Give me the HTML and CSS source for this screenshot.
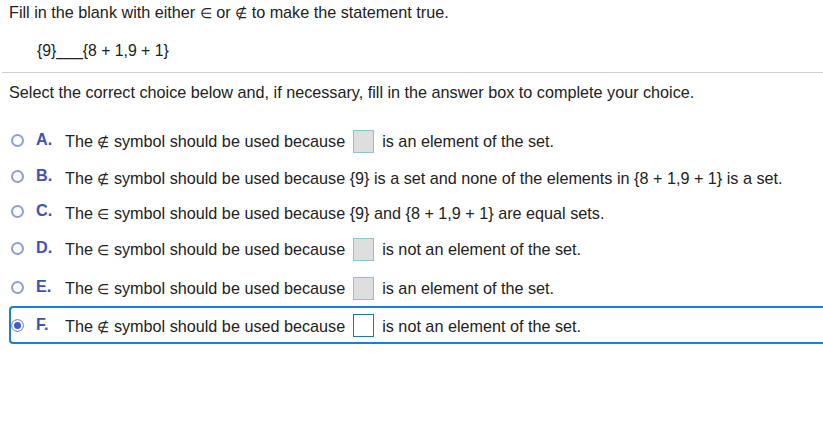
FILE: index.html
```html
<!DOCTYPE html>
<html>
<head>
<meta charset="utf-8">
<link rel="stylesheet" href="styles.css">
</head>
<body>
<div class="page">
  <div class="question">
    <p class="prompt">Fill in the blank with either <span class="sym">∈</span> or <span class="sym">∉</span> to make the statement true.</p>
    <p class="statement">{9}___{8 + 1,9 + 1}</p>
  </div>
  <div class="rule"></div>
  <p class="instruction">Select the correct choice below and, if necessary, fill in the answer box to complete your choice.</p>
  <ul class="choices">
    <li class="choice first">
      <span class="radio"></span><span class="letter">A.</span>
      <span class="text">The <span class="sym">∉</span> symbol should be used because <span class="box"></span> is an element of the set.</span>
    </li>
    <li class="choice">
      <span class="radio"></span><span class="letter">B.</span>
      <span class="text">The <span class="sym">∉</span> symbol should be used because {9} is a set and none of the elements in {8 + 1,9 + 1} is a set.</span>
    </li>
    <li class="choice mid">
      <span class="radio"></span><span class="letter">C.</span>
      <span class="text">The <span class="sym">∈</span> symbol should be used because {9} and {8 + 1,9 + 1} are equal sets.</span>
    </li>
    <li class="choice tall">
      <span class="radio"></span><span class="letter">D.</span>
      <span class="text">The <span class="sym">∈</span> symbol should be used because <span class="box"></span> is not an element of the set.</span>
    </li>
    <li class="choice tall">
      <span class="radio"></span><span class="letter">E.</span>
      <span class="text">The <span class="sym">∈</span> symbol should be used because <span class="box"></span> is an element of the set.</span>
    </li>
    <li class="choice tall selected">
      <span class="radio checked"></span><span class="letter">F.</span>
      <span class="text">The <span class="sym">∉</span> symbol should be used because <span class="box active"></span> is not an element of the set.</span>
    </li>
  </ul>
</div>
</body>
</html>
```

FILE: styles.css
```css
html, body {
  margin: 0;
  padding: 0;
  background: #ffffff;
  overflow: hidden;
}
body {
  font-family: "Liberation Sans", Arial, "DejaVu Sans", sans-serif;
  font-size: 16.2px;
  color: #222222;
}
.page {
  width: 823px;
}
p {
  margin: 0;
}
.question {
  padding: 3px 0 0 9px;
}
.prompt {
  line-height: 18px;
}
.statement {
  margin-top: 20px;
  padding-left: 28px;
  font-size: 15.8px;
  line-height: 18px;
}
.sym {
  font-family: "DejaVu Sans", sans-serif;
  font-size: 14px;
  font-weight: 300;
}
.rule {
  margin: 12px 0 0 2px;
  height: 1px;
  background: #cfcfcf;
}
.instruction {
  padding-left: 9px;
  margin-top: 10px;
  line-height: 18px;
}
.choices {
  list-style: none;
  margin: 23px 0 0 9px;
  padding: 0;
  width: 830px;
}
.choice {
  display: flex;
  align-items: center;
  height: 34px;
  box-sizing: border-box;
  border: 2px solid transparent;
  border-right: none;
  border-radius: 4px 0 0 4px;
}
.choice.first {
  height: 37px;
}
.choice.mid {
  height: 36px;
}
.choice.tall {
  height: 39px;
}
.choice.selected {
  height: 38px;
  margin-top: -3px;
  padding-top: 4px;
  border-color: #1f7fcf;
}
.radio {
  width: 9px;
  height: 9px;
  border: 2px solid #8d9ddb;
  border-radius: 50%;
  flex: none;
  box-sizing: content-box;
  position: relative;
  top: -2px;
}
.radio.checked {
  width: 11px;
  height: 11px;
  border-width: 1px;
  background: #3e5ad6;
  box-shadow: inset 0 0 0 2px #ffffff;
}
.letter {
  font-weight: bold;
  color: #3f51b5;
  margin-left: 12px;
  width: 29px;
  flex: none;
  position: relative;
  top: -3px;
}
.text {
  white-space: nowrap;
  line-height: 18px;
}
.box {
  display: inline-block;
  vertical-align: middle;
  width: 19px;
  height: 21px;
  background: #dedede;
  border: 1px solid #8bc3d6;
  margin: -3px 4px 0 3px;
}
.box.active {
  background: #ffffff;
  border-color: #1a7b9b;
}
```
